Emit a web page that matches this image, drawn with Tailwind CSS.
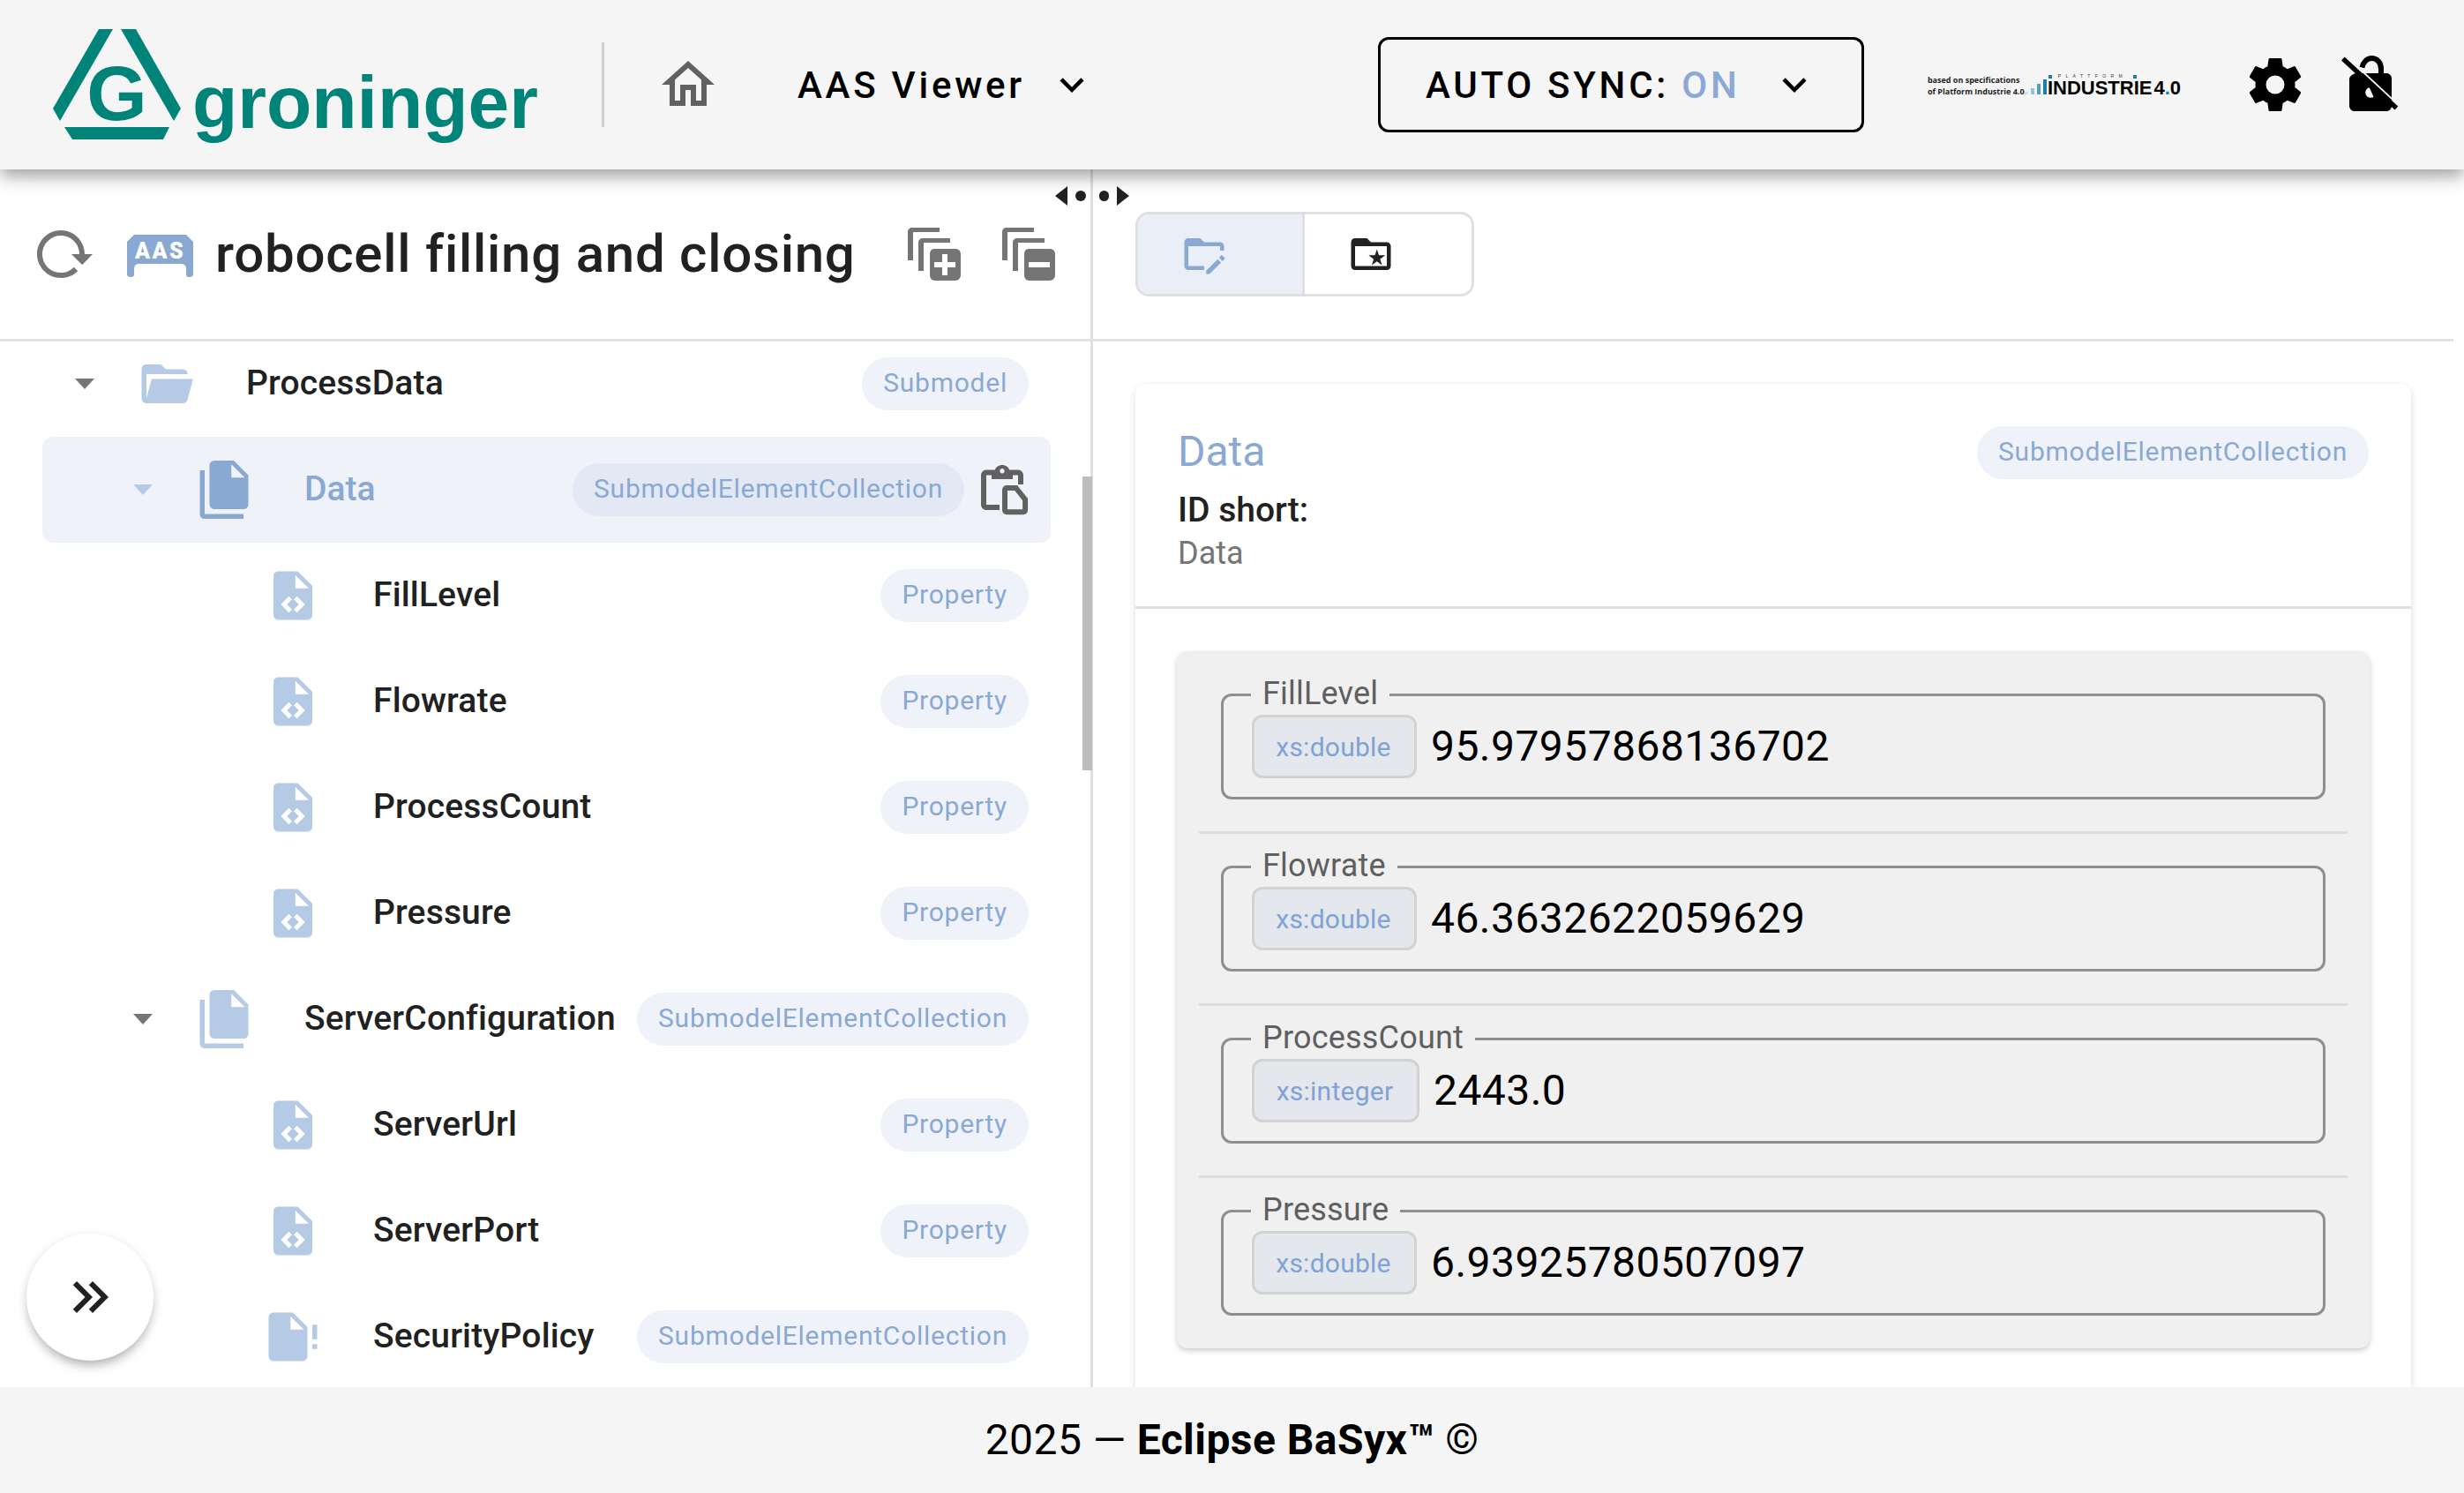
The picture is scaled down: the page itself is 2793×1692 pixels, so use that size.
<!DOCTYPE html>
<html lang="en">
<head>
    <meta charset="UTF-8">
    <title>AAS Viewer</title>
    <script src="https://cdn.jsdelivr.net/npm/@tailwindcss/browser@4"></script>
</head>
<body class="h-screen w-screen overflow-hidden flex flex-col bg-white font-['Roboto',sans-serif] text-[#212121]">

    <!-- App bar -->
    <header class="relative z-10 h-[192px] shrink-0 bg-[#f5f5f5] flex items-center shadow-[0_6px_15px_-3px_rgba(0,0,0,0.2),0_12px_15px_0_rgba(0,0,0,0.14),0_3px_30px_0_rgba(0,0,0,0.12)]">
        <svg class="ml-[60px] w-[146px] h-[126px] shrink-0" viewBox="60 33 146 126" fill="#00847a">
            <polygon points="112,33 128,33 68,137 60,123"/>
            <polygon points="137,33 154,33 205,123 197,137"/>
            <polygon points="73,144 192,144 185,158 82,158"/>
            <text x="132.5" y="136" text-anchor="middle" font-family="Liberation Sans" font-weight="700" font-size="88">G</text>
        </svg>
        <span class="ml-[12px] mt-[39px] w-[404px] shrink-0 font-['Liberation_Sans'] font-bold text-[84px] leading-none text-[#00847a]">groninger</span>
        <div class="w-[3px] h-[96px] bg-[#d0d0d0] shrink-0 ml-[60px]"></div>
        <svg class="ml-[59px] w-[72px] h-[72px] shrink-0" viewBox="0 0 24 24" fill="#616161"><path d="M12 5.69L17 10.19V18H15V12H9V18H7V10.19L12 5.69M12 3L2 12H5V20H11V14H13V20H19V12H22L12 3Z"/></svg>
        <span class="ml-[88px] mt-[2px] text-[42px] font-medium tracking-[3.75px] text-black leading-none">AAS Viewer</span>
        <svg class="ml-[26px] w-[54px] h-[54px] shrink-0" viewBox="0 0 24 24"><path d="M7.41 8.58L12 13.17L16.59 8.58L18 10L12 16L6 10L7.41 8.58Z"/></svg>
        <div class="ml-[320px] w-[551px] h-[108px] shrink-0 border-[3px] border-black rounded-[12px] flex items-center pl-[51px]">
            <span class="mt-[2px] text-[42px] font-medium tracking-[3.75px] text-black leading-none">AUTO SYNC: <span class="text-[#8aa9d4]">ON</span></span>
            <svg class="ml-[34px] w-[54px] h-[54px] shrink-0" viewBox="0 0 24 24"><path d="M7.41 8.58L12 13.17L16.59 8.58L18 10L12 16L6 10L7.41 8.58Z"/></svg>
        </div>
        <!-- Plattform Industrie 4.0 mark -->
        <div class="ml-[72px] w-[285px] h-[30px] shrink-0 relative">
            <div class="absolute left-0 top-[3px] font-['Open_Sans'] font-bold text-[9px] leading-[13px] text-[#222] whitespace-nowrap">based on specifications<br>of Platform Industrie 4.0</div>
            <svg class="absolute left-[110px] top-0 w-[26px] h-[27px]" viewBox="0 0 26 27">
                <rect x="0" y="23" width="4" height="3" fill="#cfe4ef"/>
                <rect x="7" y="19" width="4" height="7" fill="#94c4dc"/>
                <rect x="14" y="14" width="4" height="12" fill="#4d9ec4"/>
                <rect x="21" y="9" width="4" height="17" fill="#1a7fb0"/>
            </svg>
            <div class="absolute left-[137px] top-[2px] w-[100px] flex items-center justify-between font-['Liberation_Sans'] text-[5px] leading-[7px] text-[#333]">
                <i class="w-[4px] h-[4px] bg-[#1a7fb0]"></i><span class="tracking-[5.4px]">PLATTFORM</span><i class="w-[4px] h-[4px] bg-[#1a7fb0]"></i>
            </div>
            <div class="absolute left-[136px] top-[7px] font-['Liberation_Sans'] font-bold text-[22px] leading-[24px] text-black whitespace-nowrap">INDUSTRIE<span class="ml-[2px]">4<span class="text-[#1a7fb0]">.</span>0</span></div>
        </div>
        <svg class="ml-[73px] w-[72px] h-[72px] shrink-0" viewBox="0 0 24 24"><path d="M12,15.5A3.5,3.5 0 0,1 8.5,12A3.5,3.5 0 0,1 12,8.5A3.5,3.5 0 0,1 15.5,12A3.5,3.5 0 0,1 12,15.5M19.43,12.97C19.47,12.65 19.5,12.33 19.5,12C19.5,11.67 19.47,11.34 19.43,11L21.54,9.37C21.73,9.22 21.78,8.95 21.66,8.73L19.66,5.27C19.54,5.05 19.27,4.96 19.05,5.05L16.56,6.05C16.04,5.66 15.5,5.32 14.87,5.07L14.5,2.42C14.46,2.18 14.25,2 14,2H10C9.75,2 9.54,2.18 9.5,2.42L9.13,5.07C8.5,5.32 7.96,5.66 7.44,6.05L4.95,5.05C4.73,4.96 4.46,5.05 4.34,5.27L2.34,8.73C2.21,8.95 2.27,9.22 2.46,9.37L4.57,11C4.53,11.34 4.5,11.67 4.5,12C4.5,12.33 4.53,12.65 4.57,12.97L2.46,14.63C2.27,14.78 2.21,15.05 2.34,15.27L4.34,18.73C4.46,18.95 4.73,19.03 4.95,18.94L7.44,17.94C7.96,18.34 8.5,18.68 9.13,18.93L9.5,21.58C9.54,21.82 9.75,22 10,22H14C14.25,22 14.46,21.82 14.5,21.58L14.87,18.93C15.5,18.67 16.04,18.34 16.56,17.94L19.05,18.95C19.27,19.03 19.54,18.95 19.66,18.73L21.66,15.27C21.78,15.05 21.73,14.78 21.54,14.63L19.43,12.97Z"/></svg>
        <svg class="ml-[36px] w-[72px] h-[72px] shrink-0" viewBox="0 0 24 24"><path fill-rule="evenodd" d="M6.4 7.7H18C19.1 7.7 20 8.6 20 9.7V20C20 21.1 19.1 22 18 22H6C4.9 22 4 21.1 4 20V10C4 9.2 4.6 8.3 6.4 7.7ZM11.6 13.1C10.2 13.4 9.6 15 10.6 16.3C11.2 16.9 12.1 17.1 13.2 16.7Z"/><path fill="none" stroke="#000" stroke-width="2" d="M8.8 5.5C9.3 3.4 10.8 2 12.4 2C14.6 2 16 3.8 16 6V9"/><path fill="none" stroke="#f5f5f5" stroke-width="0.6" d="M9 7L20.4 17.6"/><path fill="none" stroke="#000" stroke-width="1.8" d="M1.6 2.2L21.8 20.8"/></svg>
    </header>

    <main class="flex-1 min-h-0 flex relative">
        <!-- drag handle of the splitter -->
        <div class="absolute left-[1196px] top-[18px] w-[84px] h-[23px] flex items-center justify-between z-20">
            <i class="w-0 h-0 border-y-[11.5px] border-y-transparent border-r-[14px] border-r-[#212121]"></i>
            <i class="w-[12px] h-[12px] rounded-full bg-[#212121] ml-[9px]"></i>
            <i class="w-[12px] h-[12px] rounded-full bg-[#212121] ml-[15px] mr-[9px]"></i>
            <i class="w-0 h-0 border-y-[11.5px] border-y-transparent border-l-[14px] border-l-[#212121]"></i>
        </div>
        <!-- scrollbar thumb of the tree -->
        <div class="absolute left-[1227px] top-[348px] w-[11px] h-[333px] bg-[#bdbdbd] z-20"></div>

        <!-- Tree -->
        <section class="w-[1239px] shrink-0 border-r-[3px] border-[#e0e0e0] flex flex-col relative overflow-hidden">
            <div class="h-[195px] shrink-0 border-b-[3px] border-[#e0e0e0] flex items-center pl-[36px]">
                <svg class="w-[72px] h-[72px] shrink-0" viewBox="0 0 24 24" fill="#757575"><path d="M2 12C2 16.97 6.03 21 11 21C13.39 21 15.68 20.06 17.4 18.4L15.9 16.9C14.63 18.25 12.86 19 11 19C4.76 19 1.64 11.46 6.05 7.05C10.46 2.64 18 5.77 18 12H15L19 16H19.1L23 12H20C20 7.03 15.97 3 11 3C6.03 3 2 7.03 2 12Z"/></svg>
                <svg class="ml-[36px] mt-[4px] w-[75px] h-[48px] shrink-0" viewBox="0 0 75 48">
                    <path fill="#8aa9d2" d="M8 0H67L75 8V45C75 47 73 48 71 48H70C68 48 67 47 67 45V39C67 35 65 33 61 33H14C10 33 8 35 8 39V45C8 47 7 48 5 48H4C2 48 0 47 0 45V8Z"/>
                    <text x="37.5" y="27" text-anchor="middle" font-family="Roboto" font-weight="900" font-size="25" letter-spacing="2.5" fill="#fff">AAS</text>
                </svg>
                <h1 class="ml-[25px] text-[60px] font-medium leading-none tracking-[0.75px] whitespace-nowrap">robocell filling and closing</h1>
                <svg class="ml-[59px] w-[60px] h-[60px] shrink-0" viewBox="0 0 60 60" fill="#757575"><path d="M6 0H36V5H6V37H0V5C0 2 2 0 5 0Z"/><path d="M18 12H48V17H18V49H12V17C12 14 14 12 17 12Z"/><path fill-rule="evenodd" d="M31 24H54C57 24 60 26 60 30V54C60 57 57 60 54 60H31C27 60 25 57 25 54V30C25 26 27 24 31 24ZM39 30V39H30V45H39V54H45V45H54V39H45V30Z"/></svg>
                <svg class="ml-[47px] w-[60px] h-[60px] shrink-0" viewBox="0 0 60 60" fill="#757575"><path d="M6 0H36V5H6V37H0V5C0 2 2 0 5 0Z"/><path d="M18 12H48V17H18V49H12V17C12 14 14 12 17 12Z"/><path fill-rule="evenodd" d="M31 24H54C57 24 60 26 60 30V54C60 57 57 60 54 60H31C27 60 25 57 25 54V30C25 26 27 24 31 24ZM30 39V45H54V39Z"/></svg>
            </div>

            <div class="flex-1 min-h-0 overflow-hidden">
                <!-- list is scrolled, so the first row starts under the divider -->
                <ul class="-mt-[12px] text-[39px] font-[475] tracking-[0.15px]">
                    <li class="h-[120px] flex items-center pr-[70px]">
                        <svg class="ml-[78px] w-[36px] h-[36px] shrink-0" viewBox="0 0 36 36" fill="#757575"><polygon points="7,12 29,12 18,24"/></svg>
                        <svg class="ml-[41px] w-[66px] h-[66px] shrink-0" viewBox="0 0 24 24" fill="#b5cae4"><path d="M19,20H4C2.89,20 2,19.1 2,18V6C2,4.89 2.89,4 4,4H10L12,6H19A2,2 0 0,1 21,8H21L4,8V18L6.14,10H23.21L20.93,18.5C20.7,19.37 19.92,20 19,20Z"/></svg>
                        <span class="ml-[58px] pb-[2px] leading-none">ProcessData</span>
                        <span class="ml-auto h-[60px] px-[24px] pb-[3px] rounded-full bg-[#eff3f9] text-[#8aa9d2] text-[30px] font-normal tracking-[0.75px] flex items-center">Submodel</span>
                    </li>
                    <li class="h-[120px] flex items-center ml-[48px] mr-[45px] pr-[16px] rounded-[12px] bg-[#eff3f9]">
                        <svg class="ml-[96px] w-[36px] h-[36px] shrink-0" viewBox="0 0 36 36" fill="#b5cae4"><polygon points="7,12 29,12 18,24"/></svg>
                        <svg class="ml-[41px] w-[66px] h-[66px] shrink-0" viewBox="0 0 24 24" fill="#8aa9d2"><path d="M15,7H20.5L15,1.5V7M8,0H16L22,6V18A2,2 0 0,1 20,20H8C6.89,20 6,19.1 6,18V2A2,2 0 0,1 8,0M4,4V22H20V24H4A2,2 0 0,1 2,22V4H4Z"/></svg>
                        <span class="ml-[58px] pb-[2px] leading-none font-medium tracking-normal text-[#8aa9d2]">Data</span>
                        <span class="ml-auto h-[60px] px-[24px] pb-[3px] rounded-full bg-[#e2e9f4] text-[#8aa9d2] text-[30px] font-normal tracking-[0.75px] flex items-center">SubmodelElementCollection</span>
                        <svg class="ml-[10px] w-[72px] h-[72px] shrink-0" viewBox="0 0 24 24"><path fill="#616161" fill-rule="evenodd" d="M17 4.5H13.7C13.4 3.5 12.3 2.7 11 2.7S8.6 3.5 8.3 4.5H5C3.9 4.5 3 5.4 3 6.5V17.7C3 18.8 3.9 19.7 5 19.7H10V17.7H5V6.5H7V8H15V6.5H17V10H19V6.5C19 5.4 18.1 4.5 17 4.5ZM11 5.8C10.5 5.8 10.1 5.4 10.1 4.9S10.5 4 11 4S11.9 4.4 11.9 4.9S11.5 5.8 11 5.8Z"/><path fill="none" stroke="#616161" stroke-width="2" d="M12.7 11.3h3.5l3.5 4.4v4c0 .4-.3.7-.7.7h-6.3c-.4 0-.7-.3-.7-.7V12c0-.4.3-.7.7-.7Z"/></svg>
                    </li>
                    <li class="h-[120px] flex items-center pr-[70px]">
                        <svg class="ml-[299px] w-[66px] h-[66px] shrink-0" viewBox="0 0 24 24" fill="#b5cae4"><path d="M14,2H6C4.9,2 4,2.9 4,4V20C4,21.1 4.9,22 6,22H18C19.1,22 20,21.1 20,20V8L14,2M9.54,15.65L11.63,17.74L10.35,19L7,15.65L10.35,12.3L11.63,13.56L9.54,15.65M17,15.65L13.65,19L12.38,17.74L14.47,15.65L12.38,13.56L13.65,12.3L17,15.65M13,9V3.5L18.5,9H13Z"/></svg>
                        <span class="ml-[58px] pb-[2px] leading-none">FillLevel</span>
                        <span class="ml-auto h-[60px] px-[24px] pb-[3px] rounded-full bg-[#eff3f9] text-[#8aa9d2] text-[30px] font-normal tracking-[0.75px] flex items-center">Property</span>
                    </li>
                    <li class="h-[120px] flex items-center pr-[70px]">
                        <svg class="ml-[299px] w-[66px] h-[66px] shrink-0" viewBox="0 0 24 24" fill="#b5cae4"><path d="M14,2H6C4.9,2 4,2.9 4,4V20C4,21.1 4.9,22 6,22H18C19.1,22 20,21.1 20,20V8L14,2M9.54,15.65L11.63,17.74L10.35,19L7,15.65L10.35,12.3L11.63,13.56L9.54,15.65M17,15.65L13.65,19L12.38,17.74L14.47,15.65L12.38,13.56L13.65,12.3L17,15.65M13,9V3.5L18.5,9H13Z"/></svg>
                        <span class="ml-[58px] pb-[2px] leading-none">Flowrate</span>
                        <span class="ml-auto h-[60px] px-[24px] pb-[3px] rounded-full bg-[#eff3f9] text-[#8aa9d2] text-[30px] font-normal tracking-[0.75px] flex items-center">Property</span>
                    </li>
                    <li class="h-[120px] flex items-center pr-[70px]">
                        <svg class="ml-[299px] w-[66px] h-[66px] shrink-0" viewBox="0 0 24 24" fill="#b5cae4"><path d="M14,2H6C4.9,2 4,2.9 4,4V20C4,21.1 4.9,22 6,22H18C19.1,22 20,21.1 20,20V8L14,2M9.54,15.65L11.63,17.74L10.35,19L7,15.65L10.35,12.3L11.63,13.56L9.54,15.65M17,15.65L13.65,19L12.38,17.74L14.47,15.65L12.38,13.56L13.65,12.3L17,15.65M13,9V3.5L18.5,9H13Z"/></svg>
                        <span class="ml-[58px] pb-[2px] leading-none">ProcessCount</span>
                        <span class="ml-auto h-[60px] px-[24px] pb-[3px] rounded-full bg-[#eff3f9] text-[#8aa9d2] text-[30px] font-normal tracking-[0.75px] flex items-center">Property</span>
                    </li>
                    <li class="h-[120px] flex items-center pr-[70px]">
                        <svg class="ml-[299px] w-[66px] h-[66px] shrink-0" viewBox="0 0 24 24" fill="#b5cae4"><path d="M14,2H6C4.9,2 4,2.9 4,4V20C4,21.1 4.9,22 6,22H18C19.1,22 20,21.1 20,20V8L14,2M9.54,15.65L11.63,17.74L10.35,19L7,15.65L10.35,12.3L11.63,13.56L9.54,15.65M17,15.65L13.65,19L12.38,17.74L14.47,15.65L12.38,13.56L13.65,12.3L17,15.65M13,9V3.5L18.5,9H13Z"/></svg>
                        <span class="ml-[58px] pb-[2px] leading-none">Pressure</span>
                        <span class="ml-auto h-[60px] px-[24px] pb-[3px] rounded-full bg-[#eff3f9] text-[#8aa9d2] text-[30px] font-normal tracking-[0.75px] flex items-center">Property</span>
                    </li>
                    <li class="h-[120px] flex items-center pr-[70px]">
                        <svg class="ml-[144px] w-[36px] h-[36px] shrink-0" viewBox="0 0 36 36" fill="#757575"><polygon points="7,12 29,12 18,24"/></svg>
                        <svg class="ml-[41px] w-[66px] h-[66px] shrink-0" viewBox="0 0 24 24" fill="#b5cae4"><path d="M15,7H20.5L15,1.5V7M8,0H16L22,6V18A2,2 0 0,1 20,20H8C6.89,20 6,19.1 6,18V2A2,2 0 0,1 8,0M4,4V22H20V24H4A2,2 0 0,1 2,22V4H4Z"/></svg>
                        <span class="ml-[58px] pb-[2px] leading-none">ServerConfiguration</span>
                        <span class="ml-auto h-[60px] px-[24px] pb-[3px] rounded-full bg-[#eff3f9] text-[#8aa9d2] text-[30px] font-normal tracking-[0.75px] flex items-center">SubmodelElementCollection</span>
                    </li>
                    <li class="h-[120px] flex items-center pr-[70px]">
                        <svg class="ml-[299px] w-[66px] h-[66px] shrink-0" viewBox="0 0 24 24" fill="#b5cae4"><path d="M14,2H6C4.9,2 4,2.9 4,4V20C4,21.1 4.9,22 6,22H18C19.1,22 20,21.1 20,20V8L14,2M9.54,15.65L11.63,17.74L10.35,19L7,15.65L10.35,12.3L11.63,13.56L9.54,15.65M17,15.65L13.65,19L12.38,17.74L14.47,15.65L12.38,13.56L13.65,12.3L17,15.65M13,9V3.5L18.5,9H13Z"/></svg>
                        <span class="ml-[58px] pb-[2px] leading-none">ServerUrl</span>
                        <span class="ml-auto h-[60px] px-[24px] pb-[3px] rounded-full bg-[#eff3f9] text-[#8aa9d2] text-[30px] font-normal tracking-[0.75px] flex items-center">Property</span>
                    </li>
                    <li class="h-[120px] flex items-center pr-[70px]">
                        <svg class="ml-[299px] w-[66px] h-[66px] shrink-0" viewBox="0 0 24 24" fill="#b5cae4"><path d="M14,2H6C4.9,2 4,2.9 4,4V20C4,21.1 4.9,22 6,22H18C19.1,22 20,21.1 20,20V8L14,2M9.54,15.65L11.63,17.74L10.35,19L7,15.65L10.35,12.3L11.63,13.56L9.54,15.65M17,15.65L13.65,19L12.38,17.74L14.47,15.65L12.38,13.56L13.65,12.3L17,15.65M13,9V3.5L18.5,9H13Z"/></svg>
                        <span class="ml-[58px] pb-[2px] leading-none">ServerPort</span>
                        <span class="ml-auto h-[60px] px-[24px] pb-[3px] rounded-full bg-[#eff3f9] text-[#8aa9d2] text-[30px] font-normal tracking-[0.75px] flex items-center">Property</span>
                    </li>
                    <li class="h-[120px] flex items-center pr-[70px]">
                        <svg class="ml-[299px] w-[66px] h-[66px] shrink-0" viewBox="0 0 24 24" fill="#b5cae4"><path d="M4 2C2.9 2 2 2.9 2 4V20C2 21.1 2.9 22 4 22H16C17.1 22 18 21.1 18 20V8L12 2H4ZM11 3.5L16.5 9H11V3.5ZM20 13H22V7H20V13ZM20 17H22V15H20V17Z" fill-rule="evenodd"/></svg>
                        <span class="ml-[58px] pb-[2px] leading-none">SecurityPolicy</span>
                        <span class="ml-auto h-[60px] px-[24px] pb-[3px] rounded-full bg-[#eff3f9] text-[#8aa9d2] text-[30px] font-normal tracking-[0.75px] flex items-center">SubmodelElementCollection</span>
                    </li>
                </ul>
            </div>

            <button class="absolute left-[30px] top-[1206px] w-[144px] h-[144px] rounded-full bg-white flex items-center justify-center shadow-[0_9px_15px_-6px_rgba(0,0,0,0.3),0_3px_12px_rgba(0,0,0,0.12)]">
                <svg class="w-[72px] h-[72px]" viewBox="0 0 24 24" fill="#212121"><path d="M5.59,7.41L7,6L13,12L7,18L5.59,16.59L10.17,12L5.59,7.41M11.59,7.41L13,6L19,12L13,18L11.59,16.59L16.17,12L11.59,7.41Z"/></svg>
            </button>
        </section>

        <!-- Details -->
        <section class="w-[1542px] shrink-0 flex flex-col overflow-hidden">
            <div class="h-[195px] shrink-0 border-b-[3px] border-[#e0e0e0] pl-[48px] pt-[48px]">
                <div class="w-[384px] h-[96px] border-[3px] border-[#e0e0e0] rounded-[15px] flex overflow-hidden">
                    <div class="w-[189px] bg-[#eaeff7] border-r-[3px] border-[#e0e0e0] pl-[48px] flex items-center">
                        <svg class="w-[54px] h-[54px]" viewBox="0 0 24 24" fill="#8aa9d2"><path d="M4 4C2.89 4 2 4.89 2 6V18C2 19.1 2.9 20 4 20H12V18H4V8H20V10.2H22V8C22 6.89 21.1 6 20 6H12L10 4H4Z"/><path d="M20.7 12.3L22.2 13.8C22.4 14 22.4 14.3 22.2 14.5L21.2 15.5L19.5 13.8L20.5 12.8ZM18.8 14.5L20.5 16.2L14.7 22H13V20.3Z"/></svg>
                    </div>
                    <div class="flex-1 pl-[48px] flex items-center">
                        <svg class="w-[54px] h-[54px]" viewBox="0 0 24 24" fill="#212121"><path fill-rule="evenodd" d="M4 4C2.9 4 2 4.9 2 6V18C2 19.1 2.9 20 4 20H20C21.1 20 22 19.1 22 18V8C22 6.9 21.1 6 20 6H12L10 4H4ZM4 8H20V18H4V8Z"/><path d="M15 9.6L16 12.6H19.2L16.6 14.5L17.6 17.6L15 15.7L12.4 17.6L13.4 14.5L10.8 12.6H14Z"/></svg>
                    </div>
                </div>
            </div>
            <div class="flex-1 min-h-0 overflow-hidden pl-[48px] pt-[48px] pr-[48px]">
                <div class="rounded-t-[12px] shadow-[0_3px_9px_rgba(0,0,0,0.14)] bg-white h-[1300px]">
                    <div class="h-[255px] border-b-[3px] border-[#e0e0e0] px-[48px] relative">
                        <div class="pt-[49px] text-[48px] leading-[56px] text-[#8aa9d2]">Data</div>
                        <span class="absolute right-[48px] top-[48px] h-[60px] px-[24px] pb-[3px] rounded-full bg-[#eff3f9] text-[#8aa9d2] text-[30px] tracking-[0.75px] flex items-center">SubmodelElementCollection</span>
                        <div class="mt-[14px] text-[39px] font-medium leading-[48px]">ID short:</div>
                        <div class="mt-[2px] text-[36px] leading-[46px] text-[#757575]">Data</div>
                    </div>
                    <div class="mx-[47px] mt-[48px] bg-[#f0f0f0] rounded-[12px] shadow-[0_3px_6px_rgba(0,0,0,0.2)] px-[25px] pt-[48px] h-[790px]">
                        <div class="relative h-[120px] mx-[25px] border-[3px] border-[#8f8f8f] rounded-[12px] flex items-center pl-[32px]">
                            <span class="absolute left-[31px] -top-[27px] px-[13px] bg-[#f0f0f0] text-[36px] tracking-[0.2px] leading-[48px] text-[#5f5f5f]">FillLevel</span>
                            <span class="h-[72px] w-[187px] pr-[2px] border-[3px] border-[#d2d2d2] rounded-[12px] bg-[#e4e7ec] text-[#7fa3d6] text-[30px] tracking-[0.25px] flex items-center justify-center">xs:double</span>
                            <span class="ml-[16px] text-[48px] leading-none tracking-[0.45px] text-black">95.97957868136702</span>
                        </div>
                        <div class="h-[3px] bg-[#dcdcdc] my-[36px]"></div>
                        <div class="relative h-[120px] mx-[25px] border-[3px] border-[#8f8f8f] rounded-[12px] flex items-center pl-[32px]">
                            <span class="absolute left-[31px] -top-[27px] px-[13px] bg-[#f0f0f0] text-[36px] tracking-[0.2px] leading-[48px] text-[#5f5f5f]">Flowrate</span>
                            <span class="h-[72px] w-[187px] pr-[2px] border-[3px] border-[#d2d2d2] rounded-[12px] bg-[#e4e7ec] text-[#7fa3d6] text-[30px] tracking-[0.25px] flex items-center justify-center">xs:double</span>
                            <span class="ml-[16px] text-[48px] leading-none tracking-[0.45px] text-black">46.3632622059629</span>
                        </div>
                        <div class="h-[3px] bg-[#dcdcdc] my-[36px]"></div>
                        <div class="relative h-[120px] mx-[25px] border-[3px] border-[#8f8f8f] rounded-[12px] flex items-center pl-[32px]">
                            <span class="absolute left-[31px] -top-[27px] px-[13px] bg-[#f0f0f0] text-[36px] tracking-[0.2px] leading-[48px] text-[#5f5f5f]">ProcessCount</span>
                            <span class="h-[72px] w-[190px] pr-[2px] border-[3px] border-[#d2d2d2] rounded-[12px] bg-[#e4e7ec] text-[#7fa3d6] text-[30px] tracking-[0.25px] flex items-center justify-center">xs:integer</span>
                            <span class="ml-[16px] text-[48px] leading-none tracking-[0.45px] text-black">2443.0</span>
                        </div>
                        <div class="h-[3px] bg-[#dcdcdc] my-[36px]"></div>
                        <div class="relative h-[120px] mx-[25px] border-[3px] border-[#8f8f8f] rounded-[12px] flex items-center pl-[32px]">
                            <span class="absolute left-[31px] -top-[27px] px-[13px] bg-[#f0f0f0] text-[36px] tracking-[0.2px] leading-[48px] text-[#5f5f5f]">Pressure</span>
                            <span class="h-[72px] w-[187px] pr-[2px] border-[3px] border-[#d2d2d2] rounded-[12px] bg-[#e4e7ec] text-[#7fa3d6] text-[30px] tracking-[0.25px] flex items-center justify-center">xs:double</span>
                            <span class="ml-[16px] text-[48px] leading-none tracking-[0.45px] text-black">6.93925780507097</span>
                        </div>
                    </div>
                </div>
            </div>
        </section>
    </main>

    <footer class="relative z-10 h-[120px] shrink-0 bg-[#f5f5f5] flex items-center justify-center text-[48px] tracking-[0.45px] text-black">
        2025 — <span class="font-bold ml-[12px]">Eclipse BaSyx™</span><span class="ml-[12px]">©</span>
    </footer>
</body>
</html>
